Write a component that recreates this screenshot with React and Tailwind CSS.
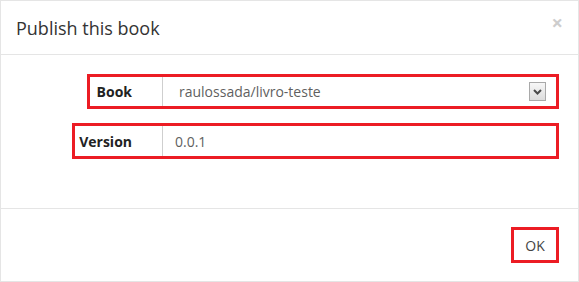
import React from 'react';

const RED = 'border-[3px] border-[#ec1c24]';

function ChevronBox() {
  return (
    <span className="flex h-[19px] w-[17px] items-center justify-center border border-[#a9a9a9] bg-gradient-to-b from-[#f7f7f7] to-[#dcdcdc]">
      <svg width="9" height="6" viewBox="0 0 9 6">
        <path d="M1 1 L4.5 4.5 L8 1" fill="none" stroke="#4a4a4a" strokeWidth="2" />
      </svg>
    </span>
  );
}

function Row({ label, labelPad, children }) {
  return (
    <div className="flex justify-end pr-[19px]">
      <div className={`flex ${RED}`}>
        <div className={`flex items-center ${labelPad} pr-[30px] text-[14px] font-bold text-[#222]`}>
          {label}
        </div>
        <div className="flex w-[394px] items-center border-l border-[#cfcfcf]">
          {children}
        </div>
      </div>
    </div>
  );
}

export default function App() {
  return (
    <div
      className="flex h-[282px] w-[579px] flex-col border border-[#e5e5e5] bg-white text-[#333]"
      style={{ fontFamily: '"Open Sans", "Liberation Sans", sans-serif' }}
    >
      {/* header */}
      <div className="flex h-[54px] items-center justify-between border-b border-[#e5e5e5] pl-[15px] pr-[15px]">
        <h4 className="text-[18px] leading-none text-[#333]">Publish this book</h4>
        <span className="mb-[9px] text-[20px] font-bold leading-none text-[#cdcdcd]">×</span>
      </div>

      {/* body */}
      <div className="flex h-[154px] flex-col gap-[14px] border-b border-[#e5e5e5] pt-[19px]">
        <Row label="Book" labelPad="pl-[7px]">
          <div className="flex h-[29px] w-full items-center justify-between pl-[16px] pr-[10px] text-[14px] text-[#5f5f5f]">
            <span>raulossada/livro-teste</span>
            <ChevronBox />
          </div>
        </Row>
        <Row label="Version" labelPad="pl-[4px]">
          <div className="flex h-[30px] w-full items-center pl-[12px] text-[14px] text-[#5f5f5f]">0.0.1</div>
        </Row>
      </div>

      {/* footer */}
      <div className="flex flex-1 items-start justify-end pr-[19px] pt-[18px]">
        <button className={`h-[36px] w-[48px] ${RED} bg-white text-[14px] text-[#444]`}>OK</button>
      </div>
    </div>
  );
}
